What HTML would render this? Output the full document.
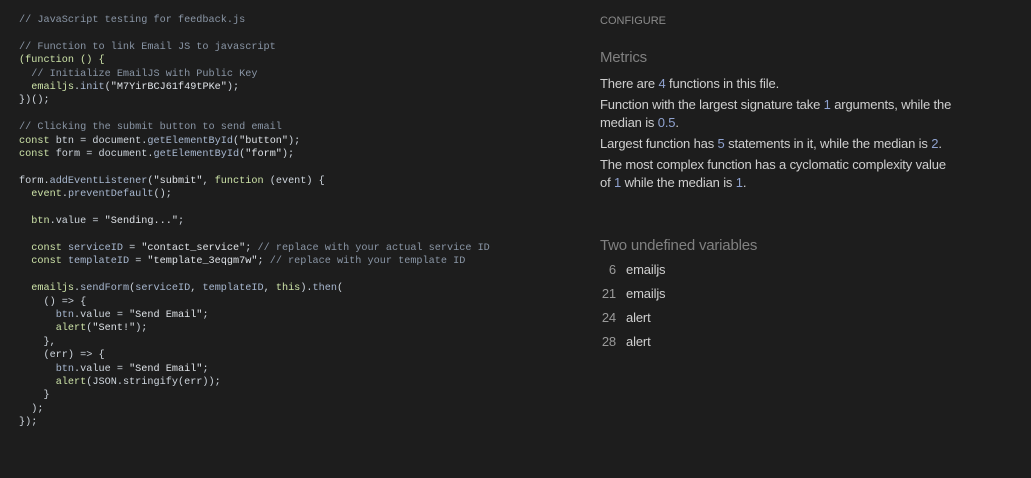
<!DOCTYPE html>
<html><head><meta charset="utf-8"><style>
body{margin:0;background:#1d1d1d;width:1031px;height:478px;overflow:hidden;font-family:"Liberation Sans",sans-serif}
pre{position:absolute;left:19px;top:14px;margin:0;font-family:"Liberation Mono",monospace;font-size:10.2px;line-height:13.4px;color:#cfd6de}
.c{color:#8a96a6}.k{color:#cde3a8}.s{color:#dfe3e8}.i{color:#a8b8d0}
.r{position:absolute;left:600px;top:0;width:420px;color:#cfcfcf;font-size:13px;letter-spacing:-0.15px}
.cf{position:absolute;top:15px;font-size:11px;color:#8a8a8a;letter-spacing:0}
.h{position:absolute;font-size:15px;color:#808080;letter-spacing:-0.2px}
.p{position:absolute;line-height:18px;margin:0;white-space:nowrap}
b{font-weight:normal;color:#8fa2cf}
.v{position:absolute;left:0;font-size:13px}
.v span{display:inline-block;width:16px;text-align:right;color:#9a9a9a;margin-right:10px}
</style></head><body>
<pre><span class="c">// JavaScript testing for feedback.js</span>

<span class="c">// Function to link Email JS to javascript</span>
<span class="k">(function () {</span>
  <span class="c">// Initialize EmailJS with Public Key</span>
  <span class="k">emailjs</span>.<span class="i">init</span>(<span class="s">"M7YirBCJ61f49tPKe"</span>);
})();

<span class="c">// Clicking the submit button to send email</span>
<span class="k">const</span> btn = document.<span class="i">getElementById</span>(<span class="s">"button"</span>);
<span class="k">const</span> form = document.<span class="i">getElementById</span>(<span class="s">"form"</span>);

form.<span class="i">addEventListener</span>(<span class="s">"submit"</span>, <span class="k">function</span> (event) {
  <span class="k">event</span>.<span class="i">preventDefault</span>();

  <span class="k">btn</span>.value = <span class="s">"Sending..."</span>;

  <span class="k">const</span> <span class="i">serviceID</span> = <span class="s">"contact_service"</span>; <span class="c">// replace with your actual service ID</span>
  <span class="k">const</span> <span class="i">templateID</span> = <span class="s">"template_3eqgm7w"</span>; <span class="c">// replace with your template ID</span>

  <span class="k">emailjs</span>.<span class="i">sendForm</span>(<span class="i">serviceID</span>, <span class="i">templateID</span>, <span class="k">this</span>).<span class="i">then</span>(
    () => {
      <span class="i">btn</span>.value = <span class="s">"Send Email"</span>;
      <span class="k">alert</span>(<span class="s">"Sent!"</span>);
    },
    (err) => {
      <span class="i">btn</span>.value = <span class="s">"Send Email"</span>;
      <span class="k">alert</span>(JSON.stringify(err));
    }
  );
});</pre>
<div class="r">
<div class="cf">CONFIGURE</div>
<div class="h" style="top:49px">Metrics</div>
<p class="p" style="top:75px">There are <b>4</b> functions in this file.</p>
<p class="p" style="top:96px">Function with the largest signature take <b>1</b> arguments, while the<br>median is <b>0.5</b>.</p>
<p class="p" style="top:135px">Largest function has <b>5</b> statements in it, while the median is <b>2</b>.</p>
<p class="p" style="top:156px">The most complex function has a cyclomatic complexity value<br>of <b>1</b> while the median is <b>1</b>.</p>
<div class="h" style="top:237px">Two undefined variables</div>
<div class="v" style="top:262px"><span>6</span>emailjs</div>
<div class="v" style="top:286px"><span>21</span>emailjs</div>
<div class="v" style="top:310px"><span>24</span>alert</div>
<div class="v" style="top:334px"><span>28</span>alert</div>
</div>
</body></html>
